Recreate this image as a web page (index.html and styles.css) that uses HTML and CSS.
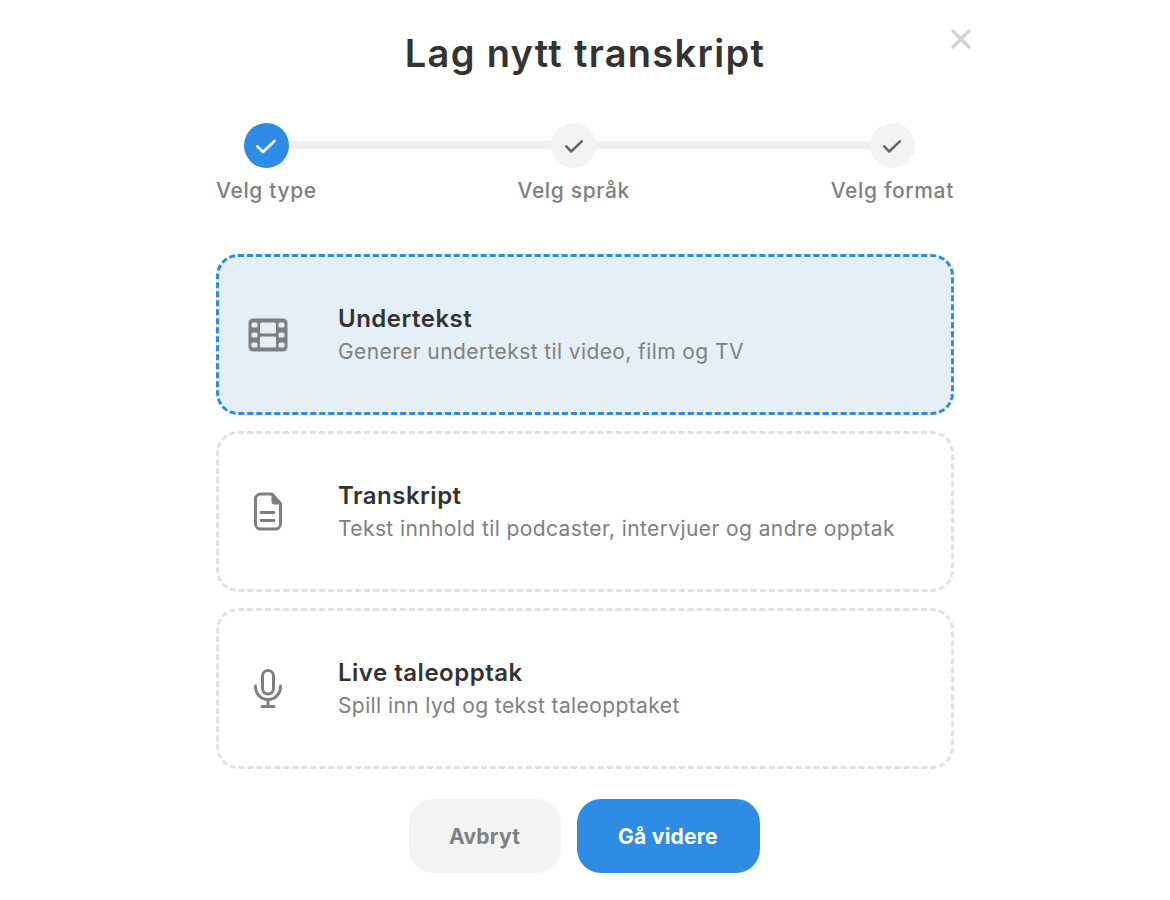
FILE: index.html
```html
<!DOCTYPE html>
<html lang="no">
<head>
<meta charset="utf-8">
<title>Lag nytt transkript</title>
<link rel="stylesheet" href="styles.css">
</head>
<body>
<main class="modal">
  <button class="close" aria-label="Lukk">
    <svg width="22" height="22" viewBox="0 0 22 22"><path d="M3 3l16 16M19 3L3 19" fill="none" stroke="#d3d3d3" stroke-width="3.400" stroke-linecap="round"/></svg>
  </button>
  <h1 class="title">Lag nytt transkript</h1>
  <ol class="steps">
    <li class="step step-done">
      <span class="dot"><svg width="24" height="24" viewBox="0 0 24 24"><path d="M3.500 12.500l5.500 5.500 11.500-11" fill="none" stroke="#fff" stroke-width="2.600" stroke-linecap="round" stroke-linejoin="round"/></svg></span>
      <span class="label">Velg type</span>
    </li>
    <li class="step">
      <span class="dot"><svg width="22" height="22" viewBox="0 0 24 24"><path d="M3.500 12.500l5.500 5.500 11.500-11" fill="none" stroke="#666" stroke-width="2.800" stroke-linecap="round" stroke-linejoin="round"/></svg></span>
      <span class="label">Velg språk</span>
    </li>
    <li class="step">
      <span class="dot"><svg width="22" height="22" viewBox="0 0 24 24"><path d="M3.500 12.500l5.500 5.500 11.500-11" fill="none" stroke="#666" stroke-width="2.800" stroke-linecap="round" stroke-linejoin="round"/></svg></span>
      <span class="label">Velg format</span>
    </li>
  </ol>
  <div class="cards">
    <section class="card card-active">
      <span class="icon">
        <svg width="40" height="34" viewBox="0 0 40 34"><path fill="#7f7f7f" fill-rule="evenodd" d="M5 .5h30a4.500 4.500 0 0 1 4.500 4.500v24a4.500 4.500 0 0 1-4.500 4.500H5A4.500 4.500 0 0 1 .5 29V5A4.500 4.500 0 0 1 5 .5zM5 4.500A1.500 1.500 0 0 0 3.500 6v2A1.500 1.500 0 0 0 5 9.500h3A1.500 1.500 0 0 0 9.500 8V6A1.500 1.500 0 0 0 8 4.500zM5 14.500A1.500 1.500 0 0 0 3.500 16v2A1.500 1.500 0 0 0 5 19.500h3A1.500 1.500 0 0 0 9.500 18v-2A1.500 1.500 0 0 0 8 14.500zM5 24.500A1.500 1.500 0 0 0 3.500 26v2A1.500 1.500 0 0 0 5 29.500h3A1.500 1.500 0 0 0 9.500 28v-2A1.500 1.500 0 0 0 8 24.500zM32 4.500A1.500 1.500 0 0 0 30.500 6v2A1.500 1.500 0 0 0 32 9.500h3A1.500 1.500 0 0 0 36.500 8V6A1.500 1.500 0 0 0 35 4.500zM32 14.500A1.500 1.500 0 0 0 30.500 16v2A1.500 1.500 0 0 0 32 19.500h3A1.500 1.500 0 0 0 36.500 18v-2A1.500 1.500 0 0 0 35 14.500zM32 24.500A1.500 1.500 0 0 0 30.500 26v2A1.500 1.500 0 0 0 32 29.500h3A1.500 1.500 0 0 0 36.500 28v-2A1.500 1.500 0 0 0 35 24.500zM13.500 4.500A1.500 1.500 0 0 0 12 6v8a1.500 1.500 0 0 0 1.500 1.500h13A1.500 1.500 0 0 0 28 14V6a1.500 1.500 0 0 0-1.500-1.500zM13.500 18.500A1.500 1.500 0 0 0 12 20v8a1.500 1.500 0 0 0 1.500 1.500h13A1.500 1.500 0 0 0 28 28v-8a1.500 1.500 0 0 0-1.500-1.500z"/></svg>
      </span>
      <div class="card-text">
        <h2 class="card-title">Undertekst</h2>
        <p class="card-desc">Generer undertekst til video, film og TV</p>
      </div>
    </section>
    <section class="card">
      <span class="icon">
        <svg width="40" height="40" viewBox="0 0 40 40"><path fill="none" stroke="#7f7f7f" stroke-width="3" stroke-linejoin="round" d="M12.500 2H24l8.500 9.500V32a5 5 0 0 1-5 5h-15a5 5 0 0 1-5-5V7a5 5 0 0 1 5-5z"/><path fill="#7f7f7f" d="M23.500 2l9.500 10.500h-6.500a3 3 0 0 1-3-3z"/><path fill="none" stroke="#7f7f7f" stroke-width="2.800" stroke-linecap="round" d="M13 20.500h13M13 28.500h13"/></svg>
      </span>
      <div class="card-text">
        <h2 class="card-title">Transkript</h2>
        <p class="card-desc">Tekst innhold til podcaster, intervjuer og andre opptak</p>
      </div>
    </section>
    <section class="card">
      <span class="icon">
        <svg width="40" height="40" viewBox="0 0 40 40"><rect x="14.500" y="1.500" width="11" height="23.500" rx="5.500" fill="none" stroke="#7f7f7f" stroke-width="3"/><path fill="none" stroke="#7f7f7f" stroke-width="3" stroke-linecap="round" d="M7.500 17v1a12.500 12.500 0 0 0 25 0v-1M20 31v6.500M14 37.500h12"/></svg>
      </span>
      <div class="card-text">
        <h2 class="card-title">Live taleopptak</h2>
        <p class="card-desc">Spill inn lyd og tekst taleopptaket</p>
      </div>
    </section>
  </div>
  <div class="actions">
    <button class="btn btn-cancel">Avbryt</button>
    <button class="btn btn-next">Gå videre</button>
  </div>
</main>
</body>
</html>
```
FILE: styles.css
```css
* { box-sizing: border-box; }
html, body { margin: 0; background: #fff; }
body { font-family: "Inter", "Open Sans", sans-serif; color: #333; height: 900px; overflow: hidden; }
.modal { position: relative; width: 738px; margin: 0 auto; padding-top: 28px; }
.close { position: absolute; top: 28px; right: -18px; padding: 0; border: 0; background: none; display: flex; }
.title { margin: 0; height: 50px; font-size: 38px; line-height: 50px; font-weight: 600; text-align: center; color: #333; letter-spacing: 1.3px; }
.steps { position: relative; list-style: none; margin: 45px 0 0; padding: 0; display: flex; justify-content: space-between; }
.steps::before { content: ""; position: absolute; left: 49px; right: 62px; top: 18px; height: 8px; background: #eeeef3; }
.step { position: relative; display: flex; flex-direction: column; align-items: center; gap: 9px; }
.dot { width: 45px; height: 45px; border-radius: 50%; background: #f3f3f3; display: flex; align-items: center; justify-content: center; }
.step-done .dot { background: #2e8ce4; }
.label { font-size: 21px; line-height: 28px; font-weight: 500; color: #808080; white-space: nowrap; letter-spacing: 0.65px; }
.cards { margin-top: 49px; display: flex; flex-direction: column; gap: 16px; }
.card { height: 161px; border: 3px dashed #e1e1e1; border-radius: 22px; padding-left: 29px; display: flex; align-items: center; gap: 50px; }
.card-active { background: #e4eff8; border-color: #2e8ce4; }
.icon { width: 40px; height: 40px; display: flex; align-items: center; justify-content: center; flex: none; }
.card-title { margin: 0; font-size: 24px; line-height: 30px; font-weight: 600; color: #333; letter-spacing: 0.5px; }
.card-desc { margin: 4px 0 0; font-size: 21px; line-height: 28px; color: #808080; letter-spacing: 0.4px; }
.actions { margin-top: 30px; display: flex; justify-content: center; gap: 16px; padding-right: 2px; }
.btn { height: 74px; border: 0; border-radius: 24px; font-family: inherit; font-size: 21px; font-weight: 700; letter-spacing: 0.25px; }
.btn-cancel { width: 152px; background: #f3f3f3; color: #808080; }
.btn-next { width: 183px; background: #2e8ce4; color: #fff; }
```
